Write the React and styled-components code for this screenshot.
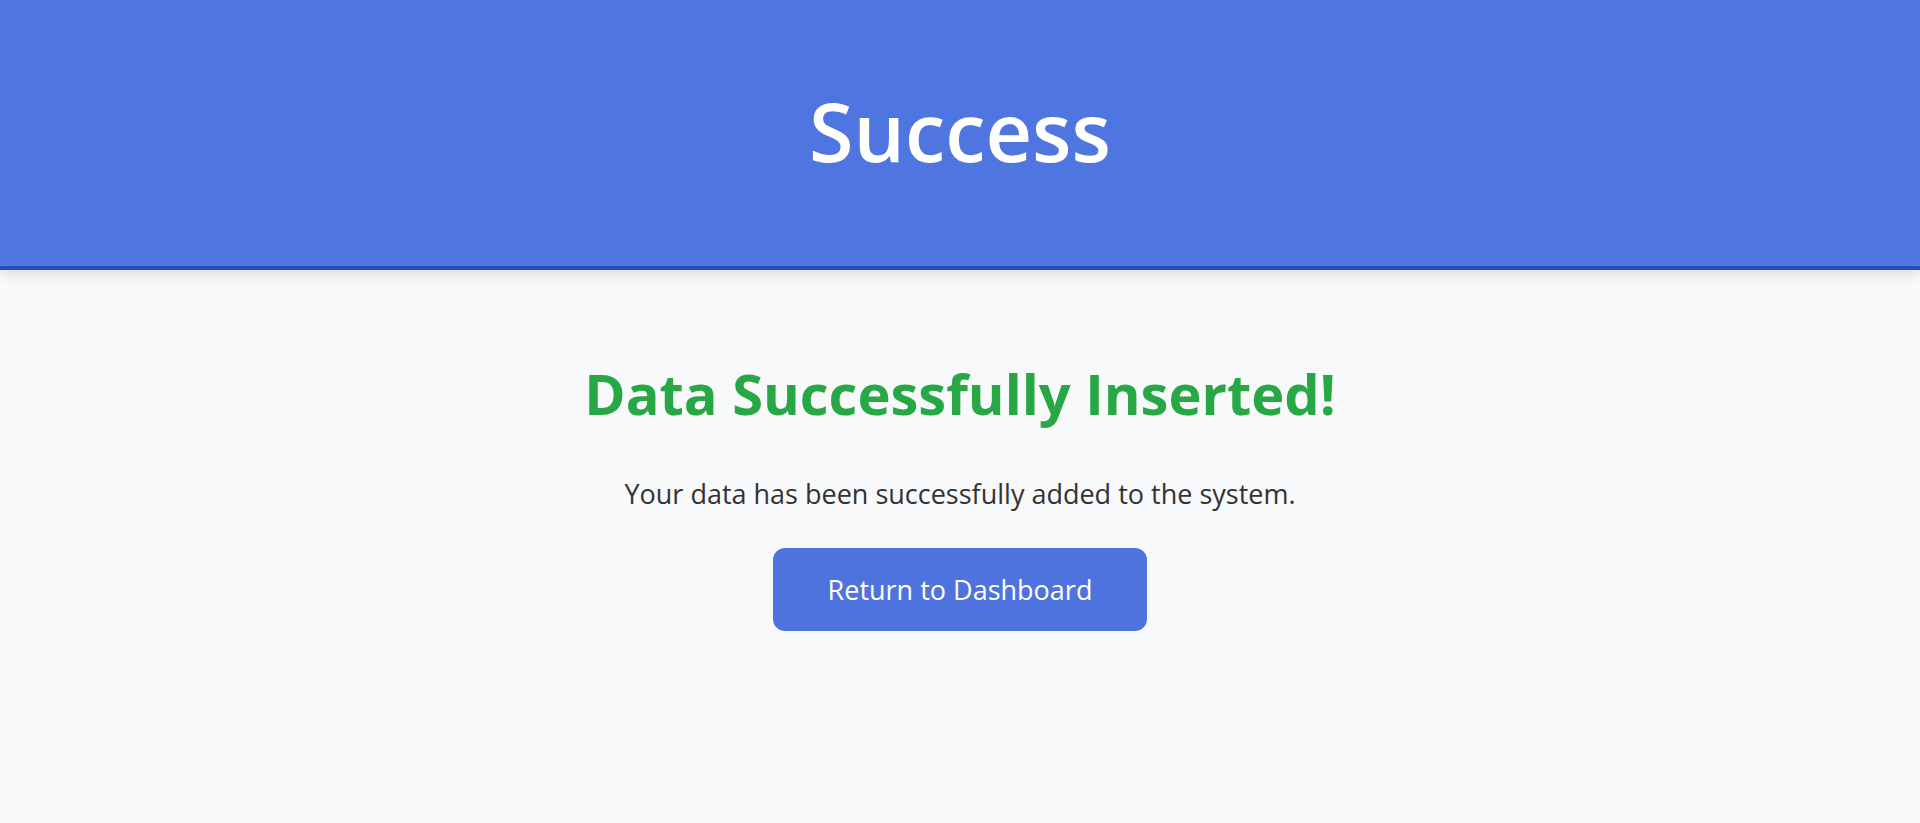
import React from 'react';
import styled, { createGlobalStyle } from 'styled-components';

const GlobalStyle = createGlobalStyle`
  html, body {
    margin: 0;
    padding: 0;
    background: #f8f9fa;
    font-family: "Open Sans", "Noto Sans", "Liberation Sans", sans-serif;
  }
`;

const Page = styled.div`
  min-height: 823px;
  background: #f8f9fa;
`;

const Header = styled.header`
  box-sizing: border-box;
  height: 270px;
  padding-bottom: 5px;
  background: #4e75e0;
  border-bottom: 4px solid #2a4bbf;
  box-shadow: 0 4px 12px rgba(0, 0, 0, 0.12);
  display: flex;
  align-items: center;
  justify-content: center;
`;

const Title = styled.h1`
  margin: 0;
  color: #ffffff;
  font-size: 81px;
  font-weight: 600;
  line-height: 1.2;
`;

const Content = styled.main`
  display: flex;
  flex-direction: column;
  align-items: center;
  padding-top: 90px;
  text-align: center;
`;

const Heading = styled.h2`
  margin: 0;
  color: #28a745;
  font-size: 56px;
  font-weight: 700;
  line-height: 1.2;
`;

const Message = styled.p`
  margin: 51px 0 0;
  color: #333333;
  font-size: 27px;
  line-height: 1.2;
`;

const DashboardButton = styled.button`
  margin-top: 37px;
  height: 83px;
  padding: 0 55px;
  border: none;
  border-radius: 12px;
  background: #4e73df;
  color: #ffffff;
  font-family: inherit;
  font-size: 27px;
  cursor: pointer;
  display: inline-flex;
  align-items: center;
  justify-content: center;

  &:hover {
    background: #3d62cf;
  }
`;

const App = () => (
  <Page>
    <GlobalStyle />
    <Header>
      <Title>Success</Title>
    </Header>
    <Content>
      <Heading>Data Successfully Inserted!</Heading>
      <Message>Your data has been successfully added to the system.</Message>
      <DashboardButton>Return to Dashboard</DashboardButton>
    </Content>
  </Page>
);

export default App;
